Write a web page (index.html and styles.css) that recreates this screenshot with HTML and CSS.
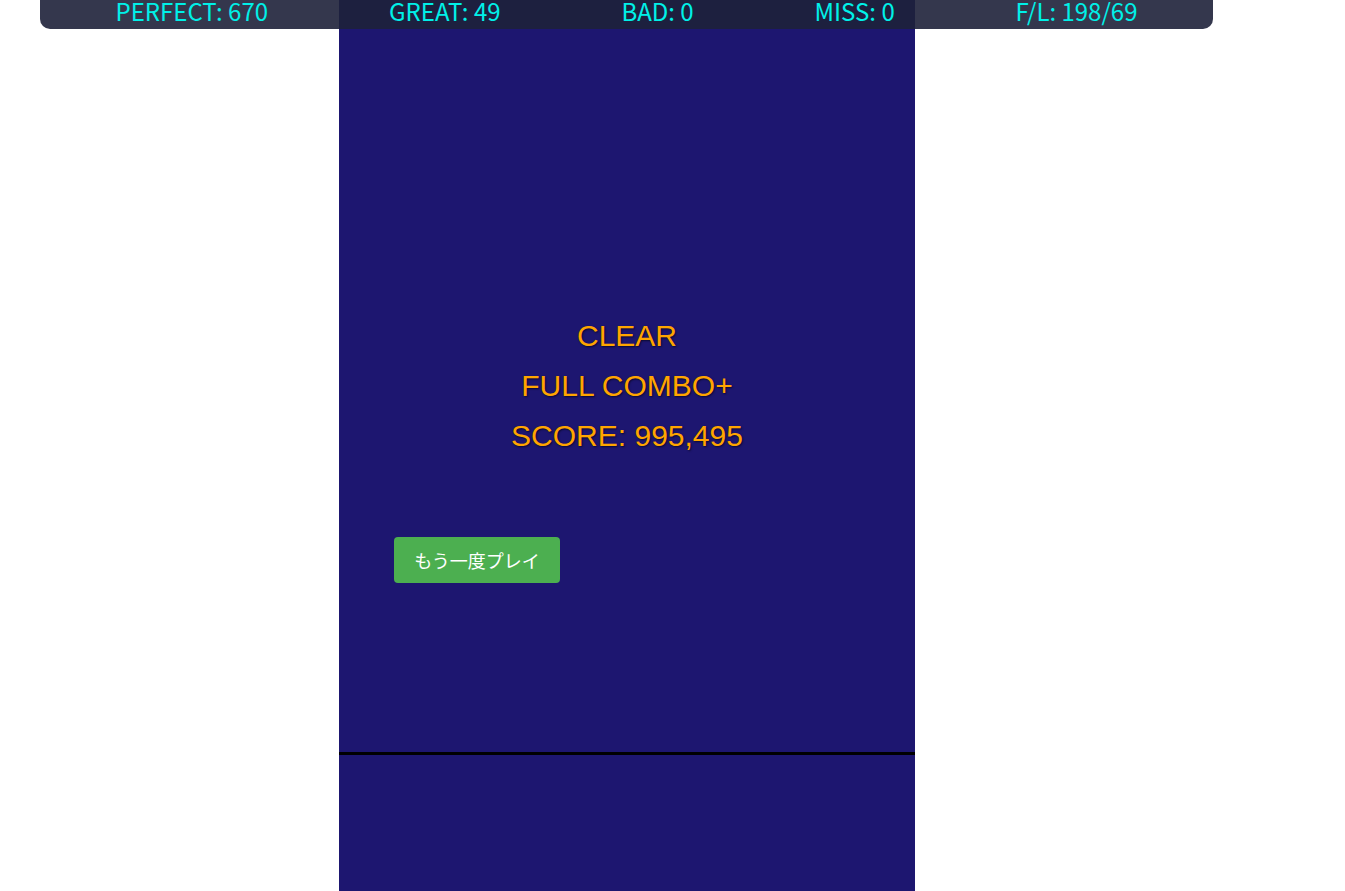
FILE: index.html
```html
<!DOCTYPE html>
<html lang="ja">
<head>
<meta charset="utf-8">
<title>Result</title>
<link rel="stylesheet" href="styles.css">
</head>
<body>
<div class="stats">
  <span class="stat">PERFECT: 670</span>
  <span class="stat">GREAT: 49</span>
  <span class="stat">BAD: 0</span>
  <span class="stat">MISS: 0</span>
  <span class="stat">F/L: 198/69</span>
</div>
<main class="stage">
  <div class="lane">
    <div class="result">
      <p class="result-line">CLEAR</p>
      <p class="result-line">FULL COMBO+</p>
      <p class="result-line">SCORE: 995,495</p>
    </div>
    <button class="retry">もう一度プレイ</button>
  </div>
  <div class="judge-line"></div>
  <div class="lane-bottom"></div>
</main>
</body>
</html>
```

FILE: styles.css
```css
html, body {
  margin: 0;
  padding: 0;
  background: #ffffff;
  height: 891px;
  overflow: hidden;
}
.stats {
  position: absolute;
  left: 40px;
  top: 0;
  width: 1173px;
  height: 29px;
  box-sizing: border-box;
  padding: 0 15px;
  display: flex;
  justify-content: space-around;
  align-items: flex-end;
  background: rgba(30, 33, 58, 0.9);
  border-radius: 0 0 10px 10px;
  color: #00f0e8;
  font-family: "Noto Sans CJK JP", "Noto Sans", sans-serif;
  font-size: 24px;
  line-height: 29px;
  z-index: 2;
}
.stat {
  white-space: nowrap;
  position: relative;
  top: -4px;
}
.stage {
  margin-left: 339px;
  width: 576px;
  height: 891px;
  background: #1d1670;
  display: flex;
  flex-direction: column;
}
.lane {
  height: 752px;
  display: flex;
  flex-direction: column;
}
.result {
  margin-top: 311px;
  display: flex;
  flex-direction: column;
  align-items: center;
}
.result-line {
  margin: 0;
  font-family: "Liberation Sans", Arial, sans-serif;
  font-size: 30px;
  line-height: 50px;
  color: #ffa500;
  text-shadow: 1px 1px 2px rgba(0, 0, 0, 0.6);
}
.retry {
  margin: 76px 0 0 55px;
  align-self: flex-start;
  width: 166px;
  height: 46px;
  padding: 0;
  border: none;
  border-radius: 4px;
  background: #4caf50;
  color: #ffffff;
  font-family: "Noto Sans CJK JP", sans-serif;
  font-size: 18px;
  line-height: 26px;
}
.judge-line {
  height: 3px;
  background: #000000;
}
.lane-bottom {
  flex: 1;
}
```
